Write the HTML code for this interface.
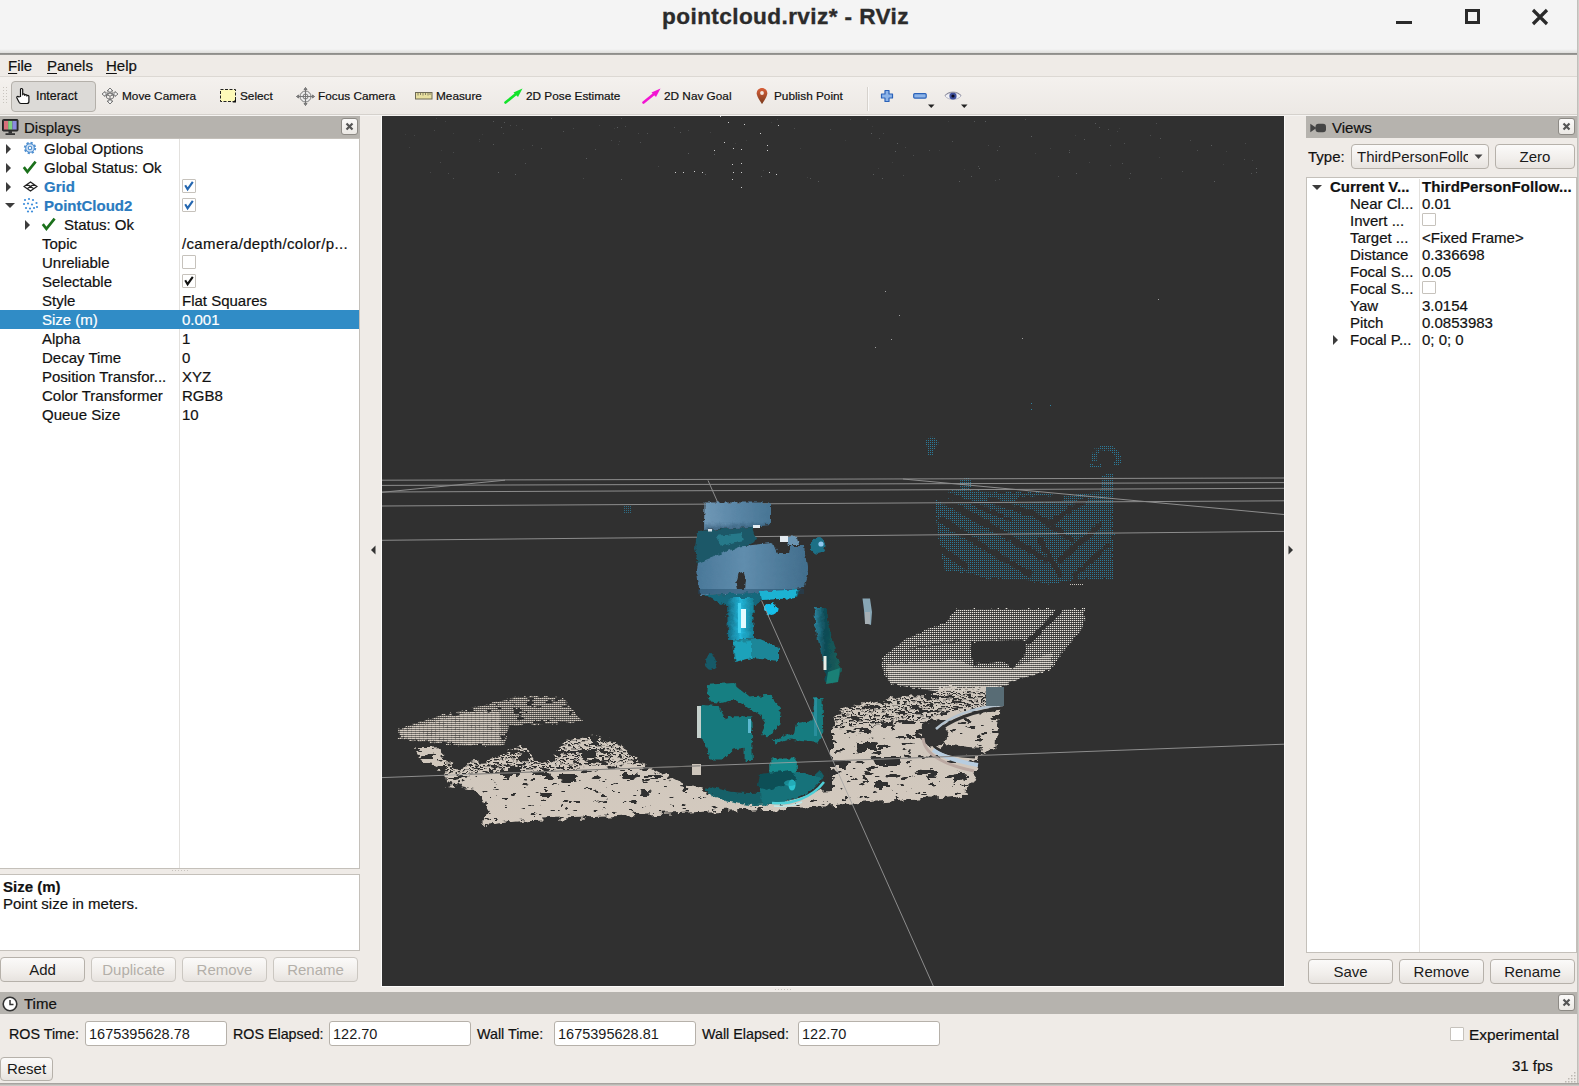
<!DOCTYPE html>
<html>
<head>
<meta charset="utf-8">
<title>pointcloud.rviz* - RViz</title>
<style>
*{box-sizing:border-box;margin:0;padding:0}
html,body{width:1579px;height:1086px;overflow:hidden;background:#efebe7;}
body{font-family:"Liberation Sans",sans-serif;font-size:14.5px;color:#1a1a1a;position:relative;}
.abs{position:absolute}
.t{position:absolute;white-space:nowrap;line-height:19px;height:19px;-webkit-text-stroke:0.200px currentColor;color:#111;}
#titlebar{left:0;top:0;width:1579px;height:53px;background:linear-gradient(#f4f4f4 0,#f4f4f4 49px,#dedddb 53px);}
#titleline{left:0;top:53px;width:1579px;height:2px;background:linear-gradient(#8a8986,#9d9c99);}
#title{left:0;top:3px;width:1571px;text-align:center;font-weight:bold;font-size:22.600px;letter-spacing:0.400px;line-height:28px;height:28px;color:#2b2b2b;-webkit-text-stroke:0.350px #2b2b2b;}
#menubar{left:0;top:55px;width:1579px;height:21px;background:#efebe7;}
#menuline{left:0;top:76px;width:1579px;height:1px;background:#dcd8d3;}
#toolbar{left:0;top:77px;width:1579px;height:39px;background:linear-gradient(#f4f1ee,#ece8e4);}
.menu{top:56px;font-size:15px;}
.menu u{text-decoration:underline;text-underline-offset:2px;}
.tb{top:87px;font-size:11.8px;color:#111;}
.dockhdr{background:#b6b3ae;height:22px;}
.dockhdr .t{font-size:15px;top:2px;}
.closebtn{position:absolute;width:17px;height:17px;border:1px solid #8d8a85;border-radius:3px;background:linear-gradient(#fbfaf9,#ebe8e4);}
.closebtn svg{position:absolute;left:3px;top:3px}
.white{background:#fff;border:1px solid #c4c0ba;}
.btn{position:absolute;height:25px;border:1px solid #b6b1aa;border-radius:4px;background:linear-gradient(#fbfaf9,#f1eeeb 60%,#e7e3df);text-align:center;font-size:15px;line-height:23px;color:#1a1a1a;}
.btn.dis{color:#b3afa9;border-color:#cbc7c1;}
.inp{position:absolute;height:25px;background:#fff;border:1px solid #b6b1aa;border-radius:3px;font-size:14.5px;line-height:24.500px;padding-left:3px;}
.cb{position:absolute;width:14px;height:14px;background:#fff;border:1px solid #c6c2bc;border-radius:1px;}

.row{position:absolute;left:0;width:359px;height:19px;}
.r{position:absolute;white-space:nowrap;line-height:19px;height:19px;font-size:15px;color:#111;-webkit-text-stroke:0.200px currentColor;}
.bl{color:#2b7bbf;font-weight:bold;}
.arr{position:absolute;width:0;height:0;}
.arr.rt{border-left:5.500px solid #3c3c3c;border-top:5px solid transparent;border-bottom:5px solid transparent;margin-left:-1px;margin-top:-0.500px;}
.arr.dn{border-top:5.500px solid #3c3c3c;border-left:5px solid transparent;border-right:5px solid transparent;margin-left:-0.500px;}
</style>
</head>
<body>
<!-- title bar -->
<div id="titlebar" class="abs"></div>
<div id="titleline" class="abs"></div>
<div id="title" class="abs">pointcloud.rviz* - RViz</div>

<!-- menu bar -->
<div id="menubar" class="abs"></div>
<div id="menuline" class="abs"></div>
<div class="t menu" style="left:8px"><u>F</u>ile</div>
<div class="t menu" style="left:47px"><u>P</u>anels</div>
<div class="t menu" style="left:106px"><u>H</u>elp</div>

<!-- toolbar -->
<div id="toolbar" class="abs"></div>


<!-- toolbar items -->
<div class="abs" style="left:0;top:114px;width:1579px;height:1px;background:#d5d1cc;"></div>
<div class="abs" style="left:0;top:115px;width:1579px;height:1px;background:#f6f4f2;"></div>
<svg class="abs" style="left:3px;top:86px" width="6" height="20"><g fill="#c9c5bf"><rect x="0" y="1" width="1" height="1"/><rect x="0" y="4" width="1" height="1"/><rect x="0" y="7" width="1" height="1"/><rect x="0" y="10" width="1" height="1"/><rect x="0" y="13" width="1" height="1"/><rect x="0" y="16" width="1" height="1"/><rect x="3" y="1" width="1" height="1"/><rect x="3" y="4" width="1" height="1"/><rect x="3" y="7" width="1" height="1"/><rect x="3" y="10" width="1" height="1"/><rect x="3" y="13" width="1" height="1"/><rect x="3" y="16" width="1" height="1"/></g></svg>
<div class="abs" style="left:11px;top:81px;width:85px;height:31px;border:1px solid #b4b0aa;border-radius:4px;background:#dcdad7;"></div>
<!-- hand -->
<svg class="abs" style="left:15px;top:87px" width="18" height="18" viewBox="0 0 18 18"><path d="M5.5 9.5V2.6c0-1.5 2.2-1.5 2.2 0v5.2c0-1.3 2.1-1.3 2.1 0v.6c0-1.2 2.1-1.2 2.1 0v.7c0-1.1 2-1.1 2 .1v5.3c0 1.3-.8 2-2 2H6.2c-1 0-1.6-.4-2.1-1.3L1.9 11c-.7-1.3 1-2.3 1.9-1.2z" fill="#fff" stroke="#111" stroke-width="1.2" stroke-linejoin="round"/></svg>
<div class="t tb" style="left:36px;font-size:12.400px">Interact</div>
<!-- move camera -->
<svg class="abs" style="left:101px;top:87px" width="18" height="18" viewBox="0 0 18 18" fill="none" stroke="#777" stroke-width="1"><path d="M9 1l3 3h-2v2h-2V4H6z M9 17l3-3h-2v-2h-2v2H6z M1 7l3-2.5V6h3v2H4v1.5z M17 7l-3-2.5V6h-3v2h3v1.5z" fill="#f4f4f4"/><path d="M5.5 7.5l3.5-1.7 3.5 1.7v3.3L9 12.6l-3.500-1.8z M5.5 7.500l3.500 1.700 3.500-1.700M9 9.200v3.400"/></svg>
<div class="t tb" style="left:122px">Move Camera</div>
<!-- select -->
<svg class="abs" style="left:219px;top:88px" width="18" height="16" viewBox="0 0 18 16"><rect x="1.5" y="1.500" width="15" height="12" fill="#fdf9b8" stroke="#222" stroke-width="1" stroke-dasharray="3 1.500"/><path d="M17 11v3.500h-3.500z" fill="#111"/></svg>
<div class="t tb" style="left:240px">Select</div>
<!-- focus camera -->
<svg class="abs" style="left:296px;top:87px" width="19" height="19" viewBox="0 0 19 19" fill="none" stroke="#777" stroke-width="1"><circle cx="9.500" cy="9.500" r="5.500" fill="#ebebeb"/><circle cx="9.500" cy="9.500" r="2.500"/><path d="M9.500 0.500v18M0.500 9.500h18"/><path d="M9.500 0.500l-1.500 2h3zM9.500 18.500l-1.500-2h3zM0.500 9.500l2-1.500v3zM18.500 9.500l-2-1.500v3z" fill="#888"/></svg>
<div class="t tb" style="left:318px">Focus Camera</div>
<!-- measure -->
<svg class="abs" style="left:415px;top:92px" width="18" height="9" viewBox="0 0 18 9"><rect x="0.500" y="0.500" width="16.500" height="6.500" fill="#e8e0a0" stroke="#6e6a55" stroke-width="1"/><path d="M3 1v2.500M5.500 1v2M8 1v2.500M10.500 1v2M13 1v2.500M15 1v2" stroke="#6e6a55" stroke-width="0.800"/></svg>
<div class="t tb" style="left:436px">Measure</div>
<!-- pose estimate -->
<svg class="abs" style="left:504px;top:87px" width="20" height="18" viewBox="0 0 20 18"><path d="M1.500 15.500L12 7" stroke="#12e32a" stroke-width="2.600" stroke-linecap="round"/><path d="M18.500 1.500L9.500 5.500l4.500 4.500z" fill="#12e32a"/></svg>
<div class="t tb" style="left:526px">2D Pose Estimate</div>
<!-- nav goal -->
<svg class="abs" style="left:642px;top:87px" width="20" height="18" viewBox="0 0 20 18"><path d="M1.500 15.500L12 7" stroke="#f214d2" stroke-width="2.600" stroke-linecap="round"/><path d="M18.500 1.500L9.500 5.500l4.500 4.500z" fill="#f214d2"/></svg>
<div class="t tb" style="left:664px">2D Nav Goal</div>
<!-- pin -->
<svg class="abs" style="left:755px;top:87px" width="14" height="18" viewBox="0 0 14 18"><defs><linearGradient id="pg" x1="0" y1="0" x2="0" y2="1"><stop offset="0" stop-color="#d9603a"/><stop offset="1" stop-color="#7a3a1c"/></linearGradient></defs><path d="M7 1C3.900 1 1.700 3.300 1.700 6.200 1.700 9.800 7 17 7 17s5.300-7.200 5.300-10.800C12.300 3.300 10.100 1 7 1z" fill="url(#pg)"/><circle cx="7" cy="6" r="1.900" fill="#f3e6df"/></svg>
<div class="t tb" style="left:774px">Publish Point</div>
<div class="abs" style="left:867px;top:87px;width:1px;height:24px;background:#d6d2cd;"></div>
<div class="abs" style="left:868px;top:87px;width:1px;height:24px;background:#faf9f8;"></div>
<!-- plus / minus / eye -->
<svg class="abs" style="left:880px;top:89px" width="14" height="14" viewBox="0 0 14 14"><path d="M5 1.500h4v3.500h3.500v4H9v3.500H5V9H1.500V5H5z" fill="#8db4e8" stroke="#2b62b8" stroke-width="1.200" stroke-linejoin="round"/></svg>
<svg class="abs" style="left:913px;top:93px" width="14" height="6" viewBox="0 0 14 6"><rect x="0.700" y="0.700" width="12.500" height="4.400" rx="1" fill="#8db4e8" stroke="#2b62b8" stroke-width="1.200"/></svg>
<svg class="abs" style="left:928px;top:104px" width="7" height="5"><path d="M0 0.500h6.500L3.250 4z" fill="#222"/></svg>
<svg class="abs" style="left:944px;top:89px" width="18" height="14" viewBox="0 0 18 14"><path d="M1 7C4 2.500 14 2.500 17 7 14 11.500 4 11.500 1 7z" fill="#f0f0f4" stroke="#aab" stroke-width="0.800"/><circle cx="9" cy="7" r="3.600" fill="#3d4f9c"/><circle cx="9" cy="7" r="1.600" fill="#0b0b20"/><path d="M1 6.500C4 2 14 2 17 6.500" fill="none" stroke="#889" stroke-width="1"/></svg>
<svg class="abs" style="left:961px;top:104px" width="7" height="5"><path d="M0 0.500h6.500L3.250 4z" fill="#222"/></svg>

<!-- window buttons -->
<div class="abs" style="left:1396px;top:21px;width:16px;height:3px;background:#2a2a2a;"></div>
<div class="abs" style="left:1465px;top:9px;width:15px;height:15px;border:3px solid #2a2a2a;"></div>
<svg class="abs" style="left:1531px;top:8px" width="18" height="18" viewBox="0 0 18 18"><path d="M2 2l14 14M16 2L2 16" stroke="#2a2a2a" stroke-width="3.200"/></svg>

<!-- displays panel -->
<div class="abs dockhdr" style="left:0;top:116px;width:360px;"><div class="t" style="left:24px">Displays</div></div>
<div class="abs white" style="left:-1px;top:138px;width:361px;height:731px;"></div>
<div class="abs white" style="left:-1px;top:874px;width:361px;height:77px;"></div>

<!-- displays tree -->
<div class="abs" style="left:179px;top:139px;width:1px;height:729px;background:#e3e1de;"></div>
<div class="abs" style="left:0;top:310px;width:359px;height:19px;background:#308cc6;"></div>
<div class="arr rt" style="left:7px;top:144px"></div>
<svg class="abs" style="left:22px;top:140px" width="16" height="16" viewBox="0 0 16 16"><g fill="none" stroke="#4f8fd0" stroke-width="1.100"><circle cx="8" cy="8" r="4.600" stroke-dasharray="1.900 1.700" stroke-width="3.200"/><circle cx="8" cy="8" r="4.300" fill="#cfe2f6"/><circle cx="8" cy="8" r="1.700" fill="#fff"/></g></svg>
<div class="r " style="left:44px;top:139px;">Global Options</div>
<div class="arr rt" style="left:7px;top:163px"></div>
<svg class="abs" style="left:22px;top:160px" width="16" height="14" viewBox="0 0 16 14"><path d="M1.800 7.200l3.600 4.600L13.600 1.600" fill="none" stroke="#1b701b" stroke-width="2.700" stroke-linejoin="miter"/></svg>
<div class="r " style="left:44px;top:158px;">Global Status: Ok</div>
<div class="arr rt" style="left:7px;top:182px"></div>
<svg class="abs" style="left:23px;top:181px" width="15" height="11" viewBox="0 0 15 11" fill="none" stroke="#222" stroke-width="1.300"><path d="M7.500 1l6.500 4.500-6.500 4.500L1 5.500z M4.250 3.250l6.500 4.500 M10.750 3.250l-6.500 4.500"/></svg>
<div class="r bl" style="left:44px;top:177px;">Grid</div>
<div class="cb" style="left:182px;top:179px"><svg width="12" height="12" viewBox="0 0 12 12" style="position:absolute;left:0;top:0"><path d="M2.200 5.200l2.400 4L9.800 1.800" fill="none" stroke="#2466b0" stroke-width="2.100"/></svg></div>
<div class="arr dn" style="left:5px;top:203px"></div>
<svg class="abs" style="left:22px;top:197px" width="17" height="16" viewBox="0 0 17 16" fill="#3f8edb"><circle cx="3" cy="3" r="1.100"/><circle cx="7" cy="2" r="1.100"/><circle cx="11" cy="3" r="1.100"/><circle cx="2" cy="7" r="1.100"/><circle cx="6" cy="6.500" r="1.100"/><circle cx="10" cy="7.500" r="1.100"/><circle cx="14.500" cy="6" r="1.100"/><circle cx="4" cy="11" r="1.100"/><circle cx="8" cy="11.500" r="1.100"/><circle cx="12" cy="11" r="1.100"/><circle cx="15" cy="10" r="1.100"/><circle cx="6" cy="14.500" r="1.100"/><circle cx="10" cy="14.500" r="1.100"/></svg>
<div class="r bl" style="left:44px;top:196px;">PointCloud2</div>
<div class="cb" style="left:182px;top:198px"><svg width="12" height="12" viewBox="0 0 12 12" style="position:absolute;left:0;top:0"><path d="M2.200 5.200l2.400 4L9.800 1.800" fill="none" stroke="#2466b0" stroke-width="2.100"/></svg></div>
<div class="arr rt" style="left:26px;top:220px"></div>
<svg class="abs" style="left:41px;top:217px" width="16" height="14" viewBox="0 0 16 14"><path d="M1.800 7.200l3.600 4.600L13.600 1.600" fill="none" stroke="#1b701b" stroke-width="2.700" stroke-linejoin="miter"/></svg>
<div class="r " style="left:64px;top:215px;">Status: Ok</div>
<div class="r " style="left:42px;top:234px;">Topic</div>
<div class="r " style="left:182px;top:234px;letter-spacing:0.350px;">/camera/depth/color/p...</div>
<div class="r " style="left:42px;top:253px;">Unreliable</div>
<div class="cb" style="left:182px;top:255px"></div>
<div class="r " style="left:42px;top:272px;">Selectable</div>
<div class="cb" style="left:182px;top:274px"><svg width="12" height="12" viewBox="0 0 12 12" style="position:absolute;left:0;top:0"><path d="M2.200 5.200l2.400 4L9.800 1.800" fill="none" stroke="#111" stroke-width="2.100"/></svg></div>
<div class="r " style="left:42px;top:291px;">Style</div>
<div class="r " style="left:182px;top:291px;">Flat Squares</div>
<div class="r " style="left:42px;top:310px;color:#fff;">Size (m)</div>
<div class="r " style="left:182px;top:310px;color:#fff;">0.001</div>
<div class="r " style="left:42px;top:329px;">Alpha</div>
<div class="r " style="left:182px;top:329px;">1</div>
<div class="r " style="left:42px;top:348px;">Decay Time</div>
<div class="r " style="left:182px;top:348px;">0</div>
<div class="r " style="left:42px;top:367px;">Position Transfor...</div>
<div class="r " style="left:182px;top:367px;">XYZ</div>
<div class="r " style="left:42px;top:386px;">Color Transformer</div>
<div class="r " style="left:182px;top:386px;">RGB8</div>
<div class="r " style="left:42px;top:405px;">Queue Size</div>
<div class="r " style="left:182px;top:405px;">10</div>
<div class="r" style="left:3px;top:877px;font-weight:bold;">Size (m)</div>
<div class="r" style="left:3px;top:894px;">Point size in meters.</div>
<div class="abs" style="left:172px;top:870px;width:16px;height:1px;background:repeating-linear-gradient(90deg,#c9c5bf 0 1px,transparent 1px 3px);"></div>
<div class="btn" style="left:0;top:957px;width:85px;">Add</div>
<div class="btn dis" style="left:91px;top:957px;width:85px;">Duplicate</div>
<div class="btn dis" style="left:182px;top:957px;width:85px;">Remove</div>
<div class="btn dis" style="left:273px;top:957px;width:85px;">Rename</div>
<svg class="abs" style="left:2px;top:119px" width="17" height="17" viewBox="0 0 17 17"><rect x="0.500" y="0.500" width="15.500" height="11.500" rx="1" fill="#333" stroke="#222"/><rect x="2" y="2" width="4.200" height="8.500" fill="#d8707a"/><rect x="6.200" y="2" width="4.200" height="8.500" fill="#7fd07f"/><rect x="10.400" y="2" width="4.200" height="8.500" fill="#8a8ae0"/><rect x="6.500" y="12" width="3.500" height="2.500" fill="#333"/><rect x="3.500" y="14.200" width="9.500" height="1.800" fill="#333"/></svg>
<div class="closebtn" style="left:341px;top:118px"><svg width="9" height="9" viewBox="0 0 9 9"><path d="M1.500 1.500l6 6M7.500 1.500l-6 6" stroke="#555" stroke-width="2.200"/></svg></div>

<!-- 3d view -->
<div id="view" class="abs" style="left:382px;top:116px;width:902px;height:870px;background:#303030;overflow:hidden;">
<!--SCENE-START-->
<svg width="902" height="870" viewBox="382 116 902 870" style="position:absolute;left:0;top:0">
<defs>
<pattern id="pBlue" width="2" height="2" patternUnits="userSpaceOnUse"><rect x="0" y="0" width="1" height="1" fill="#2c7a98"/></pattern>
<pattern id="pWhite" width="2" height="2" patternUnits="userSpaceOnUse"><rect x="0" y="0" width="1.300" height="1.100" fill="#ebe7df"/></pattern>
<pattern id="pWhiteD" width="2" height="2" patternUnits="userSpaceOnUse"><rect x="0" y="0" width="1.800" height="1.200" fill="#e2dcd3"/></pattern>
<pattern id="pWhiteS" width="2" height="4" patternUnits="userSpaceOnUse"><rect x="0" y="0" width="1" height="1" fill="#c9c5be"/></pattern>
<pattern id="pStripe" width="2" height="2" patternUnits="userSpaceOnUse"><rect x="0" y="0" width="1.6" height="1.2" fill="#d6cdc2"/></pattern>
<pattern id="pDarkDash" width="11" height="4" patternUnits="userSpaceOnUse"><rect x="0" y="0" width="6" height="1.400" fill="#000"/><rect x="6" y="2" width="4" height="1.300" fill="#000"/></pattern>
<pattern id="pStripeD" width="4" height="2" patternUnits="userSpaceOnUse"><rect x="0" y="0" width="3.6" height="1.3" fill="#d6cdc2"/></pattern>
<filter id="fEdge" x="-10%" y="-10%" width="120%" height="120%">
  <feTurbulence type="fractalNoise" baseFrequency="0.22" numOctaves="2" seed="3" result="n"/>
  <feDisplacementMap in="SourceGraphic" in2="n" scale="5" xChannelSelector="R" yChannelSelector="G"/>
</filter>
<filter id="fEdgeBig" x="-10%" y="-10%" width="120%" height="120%">
  <feTurbulence type="fractalNoise" baseFrequency="0.09 0.14" numOctaves="3" seed="5" result="n"/>
  <feDisplacementMap in="SourceGraphic" in2="n" scale="11" xChannelSelector="R" yChannelSelector="G"/>
</filter>
<filter id="fSpeck" x="0" y="0" width="100%" height="100%">
  <feTurbulence type="fractalNoise" baseFrequency="0.10 0.24" numOctaves="3" seed="21" result="n"/>
  <feColorMatrix in="n" type="matrix" values="0 0 0 0 0  0 0 0 0 0  0 0 0 0 0  0 0 0 -34 10.6"/>
</filter>
<filter id="fSpeckMore" x="0" y="0" width="100%" height="100%">
  <feTurbulence type="fractalNoise" baseFrequency="0.08 0.2" numOctaves="3" seed="8" result="n"/>
  <feColorMatrix in="n" type="matrix" values="0 0 0 0 0  0 0 0 0 0  0 0 0 0 0  0 0 0 -32 12.2"/>
</filter>
<linearGradient id="gCapTop" x1="0" y1="0" x2="1" y2="0"><stop offset="0" stop-color="#7098b6"/><stop offset="0.45" stop-color="#5b87a7"/><stop offset="1" stop-color="#487594"/></linearGradient>
<linearGradient id="gCapTopV" x1="0" y1="0" x2="0" y2="1"><stop offset="0.7" stop-color="#1c3f5a" stop-opacity="0"/><stop offset="1" stop-color="#1c3f5a" stop-opacity="0.55"/></linearGradient>
<linearGradient id="gCapLow" x1="0" y1="0" x2="1" y2="0"><stop offset="0" stop-color="#4a7899"/><stop offset="0.42" stop-color="#608dad"/><stop offset="1" stop-color="#416d8c"/></linearGradient>
<linearGradient id="gNeck" x1="0" y1="0" x2="1" y2="0"><stop offset="0" stop-color="#14647a"/><stop offset="0.5" stop-color="#22b8dc"/><stop offset="1" stop-color="#157a90"/></linearGradient>
<linearGradient id="gGround" x1="0" y1="0" x2="0" y2="1"><stop offset="0" stop-color="#cdc5bb"/><stop offset="1" stop-color="#d4cabf"/></linearGradient>
<linearGradient id="gSliver" x1="0" y1="0" x2="1" y2="0"><stop offset="0" stop-color="#2b819b"/><stop offset="0.4" stop-color="#0f4a54"/><stop offset="1" stop-color="#17635c"/></linearGradient>
</defs>
<g fill="#8a8f92">
<rect x="720" y="116" width="1" height="1" fill="#cfcfcf"/>
<rect x="728" y="122" width="1" height="1" fill="#cfcfcf"/>
<rect x="744" y="124" width="1" height="1" fill="#cfcfcf"/>
<rect x="760" y="133" width="1" height="1" fill="#cfcfcf"/>
<rect x="778" y="125" width="1" height="1" fill="#cfcfcf"/>
<rect x="767" y="145" width="1" height="1" fill="#cfcfcf"/>
<rect x="767" y="150" width="1" height="1" fill="#cfcfcf"/>
<rect x="733" y="148" width="1" height="1" fill="#cfcfcf"/>
<rect x="741" y="149" width="1" height="1" fill="#cfcfcf"/>
<rect x="732" y="164" width="1" height="1" fill="#cfcfcf"/>
<rect x="741" y="163" width="1" height="1" fill="#cfcfcf"/>
<rect x="733" y="172" width="1" height="1" fill="#cfcfcf"/>
<rect x="741" y="172" width="1" height="1" fill="#cfcfcf"/>
<rect x="769" y="172" width="1" height="1" fill="#cfcfcf"/>
<rect x="776" y="174" width="1" height="1" fill="#cfcfcf"/>
<rect x="732" y="179" width="1" height="1" fill="#cfcfcf"/>
<rect x="741" y="187" width="1" height="1" fill="#cfcfcf"/>
<rect x="675" y="172" width="1" height="1" fill="#cfcfcf"/>
<rect x="683" y="172" width="1" height="1" fill="#cfcfcf"/>
<rect x="694" y="171" width="1" height="1" fill="#cfcfcf"/>
<rect x="702" y="172" width="1" height="1" fill="#cfcfcf"/>
<rect x="714" y="150" width="1" height="1" fill="#cfcfcf"/>
<rect x="724" y="142" width="1" height="1" fill="#cfcfcf"/>
<rect x="674" y="127" width="1" height="1" opacity="0.38"/>
<rect x="453" y="152" width="1" height="1" opacity="0.28"/>
<rect x="441" y="150" width="1" height="1" opacity="0.16"/>
<rect x="771" y="122" width="1" height="1" opacity="0.18"/>
<rect x="763" y="170" width="1" height="1" opacity="0.19"/>
<rect x="586" y="158" width="1" height="1" opacity="0.48"/>
<rect x="897" y="143" width="1" height="1" opacity="0.49"/>
<rect x="430" y="172" width="1" height="1" opacity="0.25"/>
<rect x="516" y="125" width="1" height="1" opacity="0.26"/>
<rect x="1108" y="129" width="1" height="1" opacity="0.35"/>
<rect x="952" y="141" width="1" height="1" opacity="0.34"/>
<rect x="445" y="121" width="1" height="1" opacity="0.22"/>
<rect x="988" y="145" width="1" height="1" opacity="0.26"/>
<rect x="905" y="147" width="1" height="1" opacity="0.25"/>
<rect x="1089" y="162" width="1" height="1" opacity="0.24"/>
<rect x="895" y="151" width="1" height="1" opacity="0.46"/>
<rect x="1031" y="136" width="1" height="1" opacity="0.49"/>
<rect x="493" y="144" width="1" height="1" opacity="0.41"/>
<rect x="523" y="149" width="1" height="1" opacity="0.16"/>
<rect x="978" y="166" width="1" height="1" opacity="0.35"/>
<rect x="1160" y="138" width="1" height="1" opacity="0.39"/>
<rect x="913" y="155" width="1" height="1" opacity="0.31"/>
<rect x="1129" y="178" width="1" height="1" opacity="0.32"/>
<rect x="974" y="121" width="1" height="1" opacity="0.40"/>
<rect x="959" y="181" width="1" height="1" opacity="0.44"/>
<rect x="640" y="142" width="1" height="1" opacity="0.38"/>
<rect x="409" y="147" width="1" height="1" opacity="0.21"/>
<rect x="493" y="121" width="1" height="1" opacity="0.42"/>
<rect x="503" y="133" width="1" height="1" opacity="0.29"/>
<rect x="1156" y="123" width="1" height="1" opacity="0.31"/>
<rect x="873" y="174" width="1" height="1" opacity="0.44"/>
<rect x="1150" y="135" width="1" height="1" opacity="0.30"/>
<rect x="705" y="174" width="1" height="1" opacity="0.49"/>
<rect x="522" y="129" width="1" height="1" opacity="0.23"/>
<rect x="595" y="149" width="1" height="1" opacity="0.36"/>
<rect x="621" y="118" width="1" height="1" opacity="0.30"/>
<rect x="714" y="154" width="1" height="1" opacity="0.48"/>
<rect x="997" y="150" width="1" height="1" opacity="0.37"/>
<rect x="985" y="121" width="1" height="1" opacity="0.46"/>
<rect x="1076" y="173" width="1" height="1" opacity="0.43"/>
<rect x="735" y="143" width="1" height="1" opacity="0.19"/>
<rect x="948" y="121" width="1" height="1" opacity="0.17"/>
<rect x="573" y="128" width="1" height="1" opacity="0.27"/>
<rect x="436" y="118" width="1" height="1" opacity="0.20"/>
<rect x="479" y="141" width="1" height="1" opacity="0.16"/>
<rect x="1159" y="157" width="1" height="1" opacity="0.20"/>
<rect x="611" y="140" width="1" height="1" opacity="0.28"/>
<rect x="498" y="172" width="1" height="1" opacity="0.50"/>
<rect x="800" y="148" width="1" height="1" opacity="0.18"/>
<rect x="479" y="139" width="1" height="1" opacity="0.24"/>
<rect x="1119" y="128" width="1" height="1" opacity="0.16"/>
<rect x="1226" y="151" width="1" height="1" opacity="0.20"/>
<rect x="867" y="119" width="1" height="1" opacity="0.33"/>
<rect x="1251" y="173" width="1" height="1" opacity="0.39"/>
<rect x="619" y="141" width="1" height="1" opacity="0.21"/>
<rect x="1069" y="152" width="1" height="1" opacity="0.42"/>
<rect x="680" y="132" width="1" height="1" opacity="0.43"/>
<rect x="1256" y="172" width="1" height="1" opacity="0.43"/>
<rect x="1110" y="165" width="1" height="1" opacity="0.23"/>
<rect x="845" y="140" width="1" height="1" opacity="0.16"/>
<rect x="414" y="135" width="1" height="1" opacity="0.24"/>
<rect x="999" y="179" width="1" height="1" opacity="0.31"/>
<rect x="1214" y="181" width="1" height="1" opacity="0.48"/>
<rect x="710" y="132" width="1" height="1" opacity="0.23"/>
<rect x="563" y="131" width="1" height="1" opacity="0.37"/>
<rect x="1182" y="171" width="1" height="1" opacity="0.32"/>
<rect x="964" y="169" width="1" height="1" opacity="0.18"/>
<rect x="971" y="176" width="1" height="1" opacity="0.42"/>
<rect x="1050" y="148" width="1" height="1" opacity="0.21"/>
<rect x="1084" y="139" width="1" height="1" opacity="0.43"/>
<rect x="1245" y="143" width="1" height="1" opacity="0.29"/>
<rect x="1223" y="164" width="1" height="1" opacity="0.21"/>
<rect x="501" y="127" width="1" height="1" opacity="0.47"/>
<rect x="1099" y="127" width="1" height="1" opacity="0.44"/>
<rect x="1252" y="160" width="1" height="1" opacity="0.27"/>
<rect x="872" y="126" width="1" height="1" opacity="0.15"/>
<rect x="1244" y="159" width="1" height="1" opacity="0.33"/>
<rect x="1211" y="145" width="1" height="1" opacity="0.46"/>
<rect x="1117" y="131" width="1" height="1" opacity="0.24"/>
<rect x="647" y="133" width="1" height="1" opacity="0.36"/>
<rect x="618" y="144" width="1" height="1" opacity="0.20"/>
<rect x="1190" y="140" width="1" height="1" opacity="0.31"/>
<rect x="903" y="175" width="1" height="1" opacity="0.30"/>
<rect x="1197" y="150" width="1" height="1" opacity="0.34"/>
<rect x="850" y="119" width="1" height="1" opacity="0.30"/>
<rect x="551" y="118" width="1" height="1" opacity="0.43"/>
<rect x="541" y="148" width="1" height="1" opacity="0.40"/>
<rect x="879" y="138" width="1" height="1" opacity="0.33"/>
<rect x="878" y="168" width="1" height="1" opacity="0.19"/>
<rect x="883" y="133" width="1" height="1" opacity="0.25"/>
<rect x="1069" y="150" width="1" height="1" opacity="0.35"/>
<rect x="1058" y="176" width="1" height="1" opacity="0.31"/>
<rect x="929" y="150" width="1" height="1" opacity="0.33"/>
<rect x="999" y="146" width="1" height="1" opacity="0.34"/>
<rect x="810" y="178" width="1" height="1" opacity="0.39"/>
<rect x="1161" y="178" width="1" height="1" opacity="0.24"/>
<rect x="882" y="178" width="1" height="1" opacity="0.44"/>
<rect x="510" y="125" width="1" height="1" opacity="0.30"/>
<rect x="453" y="133" width="1" height="1" opacity="0.18"/>
<rect x="979" y="168" width="1" height="1" opacity="0.46"/>
<rect x="525" y="163" width="1" height="1" opacity="0.38"/>
<rect x="515" y="174" width="1" height="1" opacity="0.49"/>
<rect x="583" y="178" width="1" height="1" opacity="0.29"/>
<rect x="818" y="181" width="1" height="1" opacity="0.44"/>
<rect x="532" y="145" width="1" height="1" opacity="0.33"/>
<rect x="688" y="130" width="1" height="1" opacity="0.26"/>
<rect x="1025" y="119" width="1" height="1" opacity="0.34"/>
<rect x="777" y="119" width="1" height="1" opacity="0.27"/>
<rect x="939" y="150" width="1" height="1" opacity="0.17"/>
<rect x="1256" y="168" width="1" height="1" opacity="0.49"/>
<rect x="482" y="134" width="1" height="1" opacity="0.16"/>
<rect x="1075" y="135" width="1" height="1" opacity="0.20"/>
<rect x="761" y="176" width="1" height="1" opacity="0.44"/>
<rect x="617" y="127" width="1" height="1" opacity="0.47"/>
<rect x="892" y="162" width="1" height="1" opacity="0.18"/>
<rect x="440" y="162" width="1" height="1" opacity="0.30"/>
<rect x="453" y="178" width="1" height="1" opacity="0.37"/>
<rect x="1095" y="123" width="1" height="1" opacity="0.45"/>
<rect x="448" y="173" width="1" height="1" opacity="0.31"/>
<rect x="688" y="153" width="1" height="1" opacity="0.47"/>
<rect x="625" y="126" width="1" height="1" opacity="0.33"/>
<rect x="599" y="125" width="1" height="1" opacity="0.21"/>
<rect x="434" y="130" width="1" height="1" opacity="0.26"/>
<rect x="658" y="166" width="1" height="1" opacity="0.25"/>
<rect x="830" y="129" width="1" height="1" opacity="0.27"/>
<rect x="405" y="134" width="1" height="1" opacity="0.16"/>
<rect x="1035" y="153" width="1" height="1" opacity="0.22"/>
<rect x="807" y="177" width="1" height="1" opacity="0.19"/>
<rect x="1110" y="145" width="1" height="1" opacity="0.32"/>
<rect x="1124" y="143" width="1" height="1" opacity="0.33"/>
<rect x="995" y="180" width="1" height="1" opacity="0.27"/>
<rect x="1122" y="163" width="1" height="1" opacity="0.37"/>
<rect x="746" y="140" width="1" height="1" opacity="0.17"/>
<rect x="504" y="122" width="1" height="1" opacity="0.41"/>
<rect x="614" y="128" width="1" height="1" opacity="0.18"/>
<rect x="1130" y="173" width="1" height="1" opacity="0.38"/>
<rect x="638" y="133" width="1" height="1" opacity="0.25"/>
<rect x="794" y="128" width="1" height="1" opacity="0.31"/>
<rect x="621" y="179" width="1" height="1" opacity="0.49"/>
<rect x="871" y="133" width="1" height="1" opacity="0.49"/>
<rect x="885" y="291" width="1" height="1" fill="#a0a0a0"/>
<rect x="899" y="315" width="1" height="1" fill="#a0a0a0"/>
<rect x="891" y="339" width="1" height="1" fill="#a0a0a0"/>
<rect x="875" y="347" width="1" height="1" fill="#a0a0a0"/>
<rect x="1022" y="338" width="1" height="1" fill="#a0a0a0"/>
<rect x="1158" y="299" width="1" height="1" fill="#a0a0a0"/>
<rect x="1031" y="403" width="1" height="1" fill="#2f83a3"/>
<rect x="1031" y="409" width="1" height="1" fill="#2f83a3"/>
<rect x="1050" y="405" width="1" height="1" fill="#2f83a3"/>
<rect x="624" y="506" width="8" height="8" fill="url(#pBlue)" opacity="0.800"/>
</g>
<mask id="mBlue" maskUnits="userSpaceOnUse" x="900" y="420" width="240" height="180"><g filter="url(#fEdge)">
<polygon fill="#fff" points="936,494 958,490 1000,492 1040,492 1060,496 1100,492 1103,476 1113,476 1113,579 1075,579 1050,584 1020,579 990,579 960,572 945,571 940,545 936,520"/>
<circle cx="965" cy="484" r="6" fill="#fff"/>
<circle cx="932" cy="443" r="6.500" fill="#fff"/><rect x="928" y="448" width="5" height="8" fill="#fff"/>
<path d="M1094 461 A12 12 0 1 1 1116 466" fill="none" stroke="#fff" stroke-width="5"/>
<rect x="1103" y="474" width="10" height="20" fill="#fff"/><rect x="1090" y="464" width="12" height="4" fill="#fff"/>
<g stroke="#000" fill="none" stroke-linecap="round">
<path d="M938 497L1000 532" stroke-width="7"/>
<path d="M1000 532L1046 560" stroke-width="6"/>
<path d="M942 520L985 548" stroke-width="7"/>
<path d="M985 548L1030 574" stroke-width="6"/>
<path d="M940 548L965 566" stroke-width="6"/>
<path d="M990 500L1035 515" stroke-width="6"/>
<path d="M1035 515L1072 540" stroke-width="5"/>
<path d="M1020 500L1060 498" stroke-width="6"/>
<path d="M1052 522L1085 500" stroke-width="6"/>
<path d="M1060 560L1100 525" stroke-width="6"/>
<path d="M1075 575L1108 545" stroke-width="5"/>
<path d="M1040 540L1060 575" stroke-width="5"/>
<path d="M965 500L1010 520" stroke-width="4"/>
<path d="M936 490L960 500" stroke-width="6"/>
</g></g></mask>
<rect x="900" y="420" width="240" height="180" fill="url(#pBlue)" mask="url(#mBlue)"/>
<mask id="mWhite" maskUnits="userSpaceOnUse" x="860" y="570" width="250" height="140"><g filter="url(#fEdge)">
<path fill="#fff" fill-rule="evenodd" d="M957 609 L1085 609 L1084 626 L1060 656 L1050 669 L1012 682 L990 690 L940 690 L890 683 L883 671 L882 659 L904 640 L945 623Z M972 641 L1027 640 L1023 657 L1013 669 L1004 662 L987 663 L974 664 L970 652Z"/>
<path d="M1063 607 L1027 644" stroke="#000" stroke-width="5" fill="none"/>
<path d="M905 650 L960 640" stroke="#000" stroke-width="2" fill="none" opacity="0.6"/>
</g></mask>
<rect x="860" y="570" width="250" height="140" fill="url(#pWhite)" mask="url(#mWhite)"/>
<mask id="mWhiteD" maskUnits="userSpaceOnUse" x="860" y="640" width="250" height="70"><g filter="url(#fEdge)">
<polygon fill="#fff" points="886,664 960,660 975,668 1012,668 1052,652 1052,668 1012,682 990,692 940,692 890,684"/>
</g></mask>
<rect x="860" y="640" width="250" height="70" fill="url(#pWhiteD)" mask="url(#mWhiteD)"/>
<rect x="959" y="586" width="78" height="2" fill="url(#pWhiteS)"/>
<rect x="959" y="590" width="31" height="2" fill="url(#pWhiteS)"/>
<rect x="977" y="598" width="34" height="2" fill="url(#pWhiteS)"/>
<rect x="959" y="605" width="55" height="2" fill="url(#pWhiteS)"/>
<rect x="1030" y="590" width="16" height="2" fill="url(#pWhiteS)"/>
<rect x="1070" y="583" width="14" height="2" fill="url(#pWhiteS)"/>
<mask id="mGround" maskUnits="userSpaceOnUse" x="390" y="680" width="640" height="160">
<g filter="url(#fEdgeBig)">
<polygon fill="#fff" points="445,768 488,761 509,750 526,746 533,760 552,760 563,742 595,735 623,746 649,768 682,785 705,789 722,795 835,790 835,806 720,811 617,816 531,820 483,825 488,811 475,789 446,783"/>
<polygon fill="#fff" points="414,746 432,746 452,765 437,771 421,759"/>
<polygon fill="#fff" points="832,727 841,708 880,701 890,697 932,696 940,687 982,687 1001,689 996,752 979,756 974,780 967,792 956,796 910,799 832,805"/>
</g>
<rect x="390" y="680" width="640" height="100" filter="url(#fSpeckMore)"/>
<rect x="390" y="776" width="640" height="64" filter="url(#fSpeck)"/>
<g filter="url(#fEdgeBig)"><polygon fill="url(#pDarkDash)" points="836,700 1000,684 1000,706 960,712 900,722 836,728"/><polygon fill="url(#pDarkDash)" points="440,740 640,730 660,764 440,776"/></g>
<g filter="url(#fEdgeBig)">
<rect x="584" y="750" width="13" height="9" rx="2" fill="#000"/>
<rect x="500" y="768" width="20" height="8" rx="2" fill="#000"/>
<rect x="530" y="772" width="22" height="6" rx="2" fill="#000"/>
<rect x="560" y="776" width="16" height="5" rx="2" fill="#000"/>
<rect x="622" y="772" width="14" height="7" rx="2" fill="#000"/>
<rect x="640" y="790" width="10" height="4" rx="2" fill="#000"/>
<rect x="520" y="752" width="8" height="10" rx="2" fill="#000"/>
<rect x="540" y="794" width="12" height="3" rx="2" fill="#000"/>
<rect x="872" y="757" width="29" height="8" rx="2" fill="#000"/>
<rect x="875" y="781" width="15" height="8" rx="2" fill="#000"/>
<rect x="927" y="772" width="11" height="5" rx="2" fill="#000"/>
<rect x="953" y="775" width="12" height="7" rx="2" fill="#000"/>
<rect x="857" y="742" width="21" height="8" rx="2" fill="#000"/>
<rect x="832" y="760" width="14" height="7" rx="2" fill="#000"/>
<rect x="880" y="722" width="14" height="5" rx="2" fill="#000"/>
<rect x="905" y="735" width="10" height="4" rx="2" fill="#000"/>
<rect x="862" y="728" width="10" height="4" rx="2" fill="#000"/>
</g>
</mask>
<rect x="390" y="680" width="640" height="160" fill="url(#gGround)" mask="url(#mGround)"/>
<rect x="692" y="764" width="9" height="11" fill="#cdc5bb"/>
<mask id="mWing" maskUnits="userSpaceOnUse" x="390" y="685" width="210" height="70"><g filter="url(#fEdge)">
<polygon fill="#fff" points="398,729 440,716 473,708 522,696 563,698 582,722 545,724 509,725 505,746 466,746 399,739"/>
</g><rect x="390" y="685" width="210" height="70" filter="url(#fSpeckMore)"/></mask>
<rect x="390" y="685" width="210" height="70" fill="url(#pStripe)" mask="url(#mWing)"/>
<mask id="mWing2" maskUnits="userSpaceOnUse" x="390" y="685" width="210" height="70"><g filter="url(#fEdge)">
<polygon fill="#fff" points="400,730 470,712 500,712 500,744 466,744 401,738"/>
</g></mask>
<rect x="390" y="685" width="210" height="70" fill="url(#pStripeD)" mask="url(#mWing2)"/>
<path d="M1003 708 C975 710, 948 721, 936 733 C926 745, 936 755, 975 757" fill="none" stroke="#303030" stroke-width="3"/>
<g filter="url(#fEdge)"><polygon fill="#303030" points="922,724 940,720 948,730 944,744 930,748 921,738"/><polygon fill="#303030" points="944,744 968,747 982,748 980,755 960,756 940,752"/></g>
<path d="M1003 705 C975 707, 950 716, 936 729" fill="none" stroke="#b4c3cf" stroke-width="2.500"/>
<path d="M933 750 C945 758, 960 762, 978 765" fill="none" stroke="#b7cde0" stroke-width="4"/>
<path d="M923 738 C924 752, 940 764, 974 771" fill="none" stroke="#bba9a2" stroke-width="3"/>
<rect x="986" y="687" width="18" height="19" fill="#586c75"/>
<g stroke="#a4a4a4" stroke-width="1" opacity="0.8" fill="none">
<path d="M382 480.2L1284 478"/>
<path d="M382 492.3L505 480.2"/>
<path d="M382 485.4L1284 482.6"/>
<path d="M382 492L1284 488.3"/>
<path d="M382 506L1284 500.8"/>
<path d="M382 540.3L1284 531.4"/>
<path d="M903 479L1284 514.5"/>
<path d="M708 480.4L718 503"/>
</g>
<g>
<path d="M703 700 L826 700 L829 780 C815 806, 725 812, 704 788 Z" fill="#303030"/>
<g filter="url(#fEdge)">
<polygon fill="#1b5867" points="697,531 752,527 756,540 742,548 720,556 698,565 695,548"/>
<polygon fill="#27798a" points="715,536 742,533 744,541 722,546"/>
</g>
<g filter="url(#fEdge)">
<polygon fill="url(#gCapTop)" points="704.5,502.5 771,502.5 771,525 750,527 704,530"/>
<polygon fill="url(#gCapTopV)" points="704.5,502.5 771,502.5 771,525 750,527 704,530"/>
</g>
<rect x="753" y="525" width="7" height="3" fill="#e6edf2"/><rect x="708" y="529" width="4" height="2.500" fill="#dbe4ea"/>
<g filter="url(#fEdge)">
<path fill="url(#gCapLow)" fill-rule="evenodd" d="M698 563 L718 555 L740 546.5 L770 543 L775 546 L778 553 L789 553 L790 546 L804 546 L808 573 L803 588 L760 593.5 L700 595 L697 570Z M738 573 L744 572 L746 580 L745 589 L738 589 L736 581Z"/>
<polygon fill="#6b94b2" points="786,536 797,537 799,545 788,545"/>
</g>
<rect x="698" y="589" width="106" height="5" fill="#1f4863" opacity="0.45"/>
<rect x="780" y="536" width="8" height="6" fill="#e3eaf0"/>
<g filter="url(#fEdge)"><ellipse cx="818" cy="545.500" rx="7.500" ry="8.500" fill="#1f6f86"/></g><circle cx="821" cy="544" r="2.600" fill="#8fc8f0"/>
<g filter="url(#fEdge)">
<polygon fill="#15687c" points="704,595 760,593 800,590 796,598 760,600 756,606 726,606"/>
<polygon fill="#1bb2d2" points="760,592 798,589 795,598 762,600"/>
<polygon fill="url(#gNeck)" points="727,598 754,598 753,639 728,640"/>
<polygon fill="#1a8698" points="733,640 760,639 779,647 779,661 752,658 735,662"/>
<polygon fill="#1fa2ba" points="734,642 752,641 752,658 736,661"/>
</g>
<rect x="740" y="609" width="6" height="19" fill="#e4fbff"/><rect x="738" y="603" width="3" height="30" fill="#44d2f0"/>
<g filter="url(#fEdge)"><ellipse cx="771" cy="609" rx="6.500" ry="6" fill="#14c0ec"/></g>
<g filter="url(#fEdge)"><ellipse cx="711" cy="662" rx="6" ry="8" fill="#145a68"/></g>
<g filter="url(#fEdge)">
<polygon fill="#167f82" points="708.2,684.8 733,683.1 749.6,696.4 769.5,694.7 781,708 779.4,724.6 767.8,737.8 761.2,734.5 766.2,722.9 759.5,714.6 746.3,706.3 734.7,699.7 721.4,703 709.8,701.4 707.3,691.4"/>
<polygon fill="#157a7e" points="699.9,704.7 719.8,706.3 724.7,719.6 733,716.3 751.3,716.3 752.9,761 744.6,761 744.6,747.8 733,749.4 723,759.4 709.8,759.4 704.9,742.8 699.9,737.8"/>
<polygon fill="#157c80" points="796,722.9 812.6,721.3 814.2,698 822.5,698 823.3,732.9 817.5,742.8 801,741.1 789.4,739.5 774.4,744.4 772.8,739.5 794.3,732.9"/>
<polygon fill="#178a8c" points="770.3,758.5 796.8,758.5 796.8,774.3 770.3,774.3"/>
</g>
<rect x="697" y="706" width="4" height="32" fill="#c5d0cc"/>
<rect x="748" y="719" width="3" height="14" fill="#5bb8d0"/>
<rect x="814" y="698" width="3" height="38" fill="#2d93a3" opacity="0.8"/>
<g filter="url(#fEdge)">
<path d="M705 790 C730 812, 800 812, 824 776 L820 770 C800 792, 740 800, 712 786 Z" fill="#136068"/>
<path d="M760 776 L800 772 L822 778 C812 796, 790 803, 762 804 Z" fill="#14727a"/>
<path d="M760 774 L790 770 L798 780 L770 790 L758 786 Z" fill="#0f4f57"/>
</g>
<ellipse cx="792" cy="785" rx="3.500" ry="5.500" fill="#2cc4d0"/><ellipse cx="790" cy="783" rx="6" ry="3" fill="#1fa3ae" opacity="0.700"/>
<path d="M772 803 C790 805, 812 798, 824 782" fill="none" stroke="#4fd0d8" stroke-width="2.500"/>
<path d="M774 806 C786 807, 796 805, 802 802" fill="none" stroke="#bfe8e8" stroke-width="1.500"/>
<g filter="url(#fEdge)">
<polygon fill="url(#gSliver)" points="814.5,607 826,607 832,640 841,670 838,682 826,683 823,660 818,640 815,625"/>
</g>
<rect x="823.500" y="656" width="3" height="14" fill="#e9efe8"/>
<polygon fill="#1a8076" points="828,672 840,668 838,682 826,684"/>
<polygon fill="#88a6b5" points="862.5,598.5 870,598.5 872,612 871,625 865,623 864,610"/>
<rect x="865" y="612" width="5" height="12" fill="#a6afb4"/>
</g>
<g stroke="#a4a4a4" stroke-width="1" opacity="0.8" fill="none">
<path d="M382 777.6L1284 744.2"/>
<path d="M761.5 600.5L933.3 986"/>
</g>
<path d="M470 774.300L700 765.800" stroke="#6f6c68" stroke-width="1" opacity="0.700"/>
<path d="M840 760.600L990 755" stroke="#6f6c68" stroke-width="1" opacity="0.600"/>
</svg>
<!--SCENE-END-->
</div>

<!-- views panel -->
<div class="abs dockhdr" style="left:1306px;top:116px;width:271px;"><div class="t" style="left:26px">Views</div></div>
<div class="abs white" style="left:1306px;top:177px;width:271px;height:776px;"></div>

<!-- time panel -->
<div class="abs dockhdr" style="left:0;top:992px;width:1577px;"><div class="t" style="left:24px">Time</div></div>

<!-- views content -->
<svg class="abs" style="left:1310px;top:123px" width="17" height="10" viewBox="0 0 17 10"><path d="M0.300 0.800l6.200 4.200-6.200 4.200z" fill="#444"/><rect x="5.500" y="0.800" width="10.500" height="8.400" rx="3" fill="#444"/></svg>
<div class="closebtn" style="left:1558px;top:118px"><svg width="9" height="9" viewBox="0 0 9 9"><path d="M1.500 1.500l6 6M7.500 1.500l-6 6" stroke="#555" stroke-width="2.200"/></svg></div>
<div class="r" style="left:1308px;top:147px;">Type:</div>
<div class="btn" style="left:1351px;top:144px;width:138px;height:25px;text-align:left;padding-left:5px;overflow:hidden;"><div style="width:111px;overflow:hidden;white-space:nowrap;">ThirdPersonFollower (rviz)</div></div>
<svg class="abs" style="left:1474px;top:154px" width="9" height="6"><path d="M0.500 0.500h8L4.500 5z" fill="#444"/></svg>
<div class="btn" style="left:1495px;top:144px;width:80px;height:25px;">Zero</div>
<div class="abs" style="left:1419px;top:179px;width:1px;height:773px;background:#e3e1de;"></div>
<div class="arr dn" style="left:1312px;top:185px"></div>
<div class="r" style="left:1330px;top:178px;height:17px;line-height:17px;font-weight:bold;">Current V...</div>
<div class="r" style="left:1422px;top:178px;height:17px;line-height:17px;font-weight:bold;letter-spacing:0.100px;">ThirdPersonFollow...</div>
<div class="r" style="left:1350px;top:195px;height:17px;line-height:17px;">Near Cl...</div>
<div class="r" style="left:1422px;top:195px;height:17px;line-height:17px;">0.01</div>
<div class="r" style="left:1350px;top:212px;height:17px;line-height:17px;">Invert ...</div>
<div class="cb" style="left:1422px;top:213px;width:14px;height:13px;"></div>
<div class="r" style="left:1350px;top:229px;height:17px;line-height:17px;">Target ...</div>
<div class="r" style="left:1422px;top:229px;height:17px;line-height:17px;">&lt;Fixed Frame&gt;</div>
<div class="r" style="left:1350px;top:246px;height:17px;line-height:17px;">Distance</div>
<div class="r" style="left:1422px;top:246px;height:17px;line-height:17px;">0.336698</div>
<div class="r" style="left:1350px;top:263px;height:17px;line-height:17px;">Focal S...</div>
<div class="r" style="left:1422px;top:263px;height:17px;line-height:17px;">0.05</div>
<div class="r" style="left:1350px;top:280px;height:17px;line-height:17px;">Focal S...</div>
<div class="cb" style="left:1422px;top:281px;width:14px;height:13px;"></div>
<div class="r" style="left:1350px;top:297px;height:17px;line-height:17px;">Yaw</div>
<div class="r" style="left:1422px;top:297px;height:17px;line-height:17px;">3.0154</div>
<div class="r" style="left:1350px;top:314px;height:17px;line-height:17px;">Pitch</div>
<div class="r" style="left:1422px;top:314px;height:17px;line-height:17px;">0.0853983</div>
<div class="r" style="left:1350px;top:331px;height:17px;line-height:17px;">Focal P...</div>
<div class="r" style="left:1422px;top:331px;height:17px;line-height:17px;">0; 0; 0</div>
<div class="arr rt" style="left:1334px;top:335px"></div>
<div class="btn" style="left:1308px;top:959px;width:85px;">Save</div>
<div class="btn" style="left:1399px;top:959px;width:85px;">Remove</div>
<div class="btn" style="left:1490px;top:959px;width:85px;">Rename</div>
<!-- time content -->
<svg class="abs" style="left:2px;top:996px" width="16" height="16" viewBox="0 0 16 16"><circle cx="8" cy="8" r="6.800" fill="#fff" stroke="#333" stroke-width="1.600"/><path d="M8 4v4.500h3.500" fill="none" stroke="#333" stroke-width="1.500"/></svg>
<div class="closebtn" style="left:1558px;top:994px"><svg width="9" height="9" viewBox="0 0 9 9"><path d="M1.500 1.500l6 6M7.500 1.500l-6 6" stroke="#555" stroke-width="2.200"/></svg></div>
<div class="r" style="left:9px;top:1025px;font-size:14.300px;">ROS Time:</div>
<div class="inp" style="left:85px;top:1021px;width:142px;">1675395628.78</div>
<div class="r" style="left:233px;top:1025px;font-size:14.300px;">ROS Elapsed:</div>
<div class="inp" style="left:329px;top:1021px;width:142px;">122.70</div>
<div class="r" style="left:477px;top:1025px;font-size:14.300px;">Wall Time:</div>
<div class="inp" style="left:554px;top:1021px;width:142px;">1675395628.81</div>
<div class="r" style="left:702px;top:1025px;font-size:14.300px;">Wall Elapsed:</div>
<div class="inp" style="left:798px;top:1021px;width:142px;">122.70</div>
<div class="cb" style="left:1450px;top:1027px;"></div>
<div class="r" style="left:1469px;top:1025px;font-size:15.400px;">Experimental</div>
<div class="r" style="left:1512px;top:1056px;">31 fps</div>
<div class="btn" style="left:0;top:1057px;width:53px;height:24px;line-height:22px;">Reset</div>
<svg class="abs" style="left:370px;top:545px" width="6" height="10"><path d="M5.500 0.500v9L1 5z" fill="#333"/></svg>
<svg class="abs" style="left:1288px;top:545px" width="6" height="10"><path d="M0.500 0.500v9L5 5z" fill="#333"/></svg>
<div class="abs" style="left:381px;top:116px;width:1px;height:871px;background:#fbfaf9;"></div>
<div class="abs" style="left:1284px;top:116px;width:1px;height:871px;background:#fbfaf9;"></div>
<div class="abs" style="left:381px;top:986px;width:904px;height:1px;background:#fbfaf9;"></div>
<div class="abs" style="left:775px;top:989px;width:16px;height:1px;background:repeating-linear-gradient(90deg,#c9c5bf 0 1px,transparent 1px 3px);"></div>
<div class="abs" style="left:1577px;top:0;width:2px;height:1086px;background:linear-gradient(90deg,#b9b6b2,#dad7d3);"></div>
<div class="abs" style="left:0;top:1083px;width:1579px;height:3px;background:linear-gradient(#9d9a96,#d6d3cf);"></div>
<svg class="abs" style="left:1565px;top:1071px" width="12" height="12"><g fill="#bdb9b3"><rect x="9" y="1" width="1.500" height="1.500"/><rect x="6" y="4" width="1.500" height="1.500"/><rect x="9" y="4" width="1.500" height="1.500"/><rect x="3" y="7" width="1.500" height="1.500"/><rect x="6" y="7" width="1.500" height="1.500"/><rect x="9" y="7" width="1.500" height="1.500"/><rect x="0" y="10" width="1.500" height="1.500"/><rect x="3" y="10" width="1.500" height="1.500"/><rect x="6" y="10" width="1.500" height="1.500"/><rect x="9" y="10" width="1.500" height="1.500"/></g></svg>
</body>
</html>
